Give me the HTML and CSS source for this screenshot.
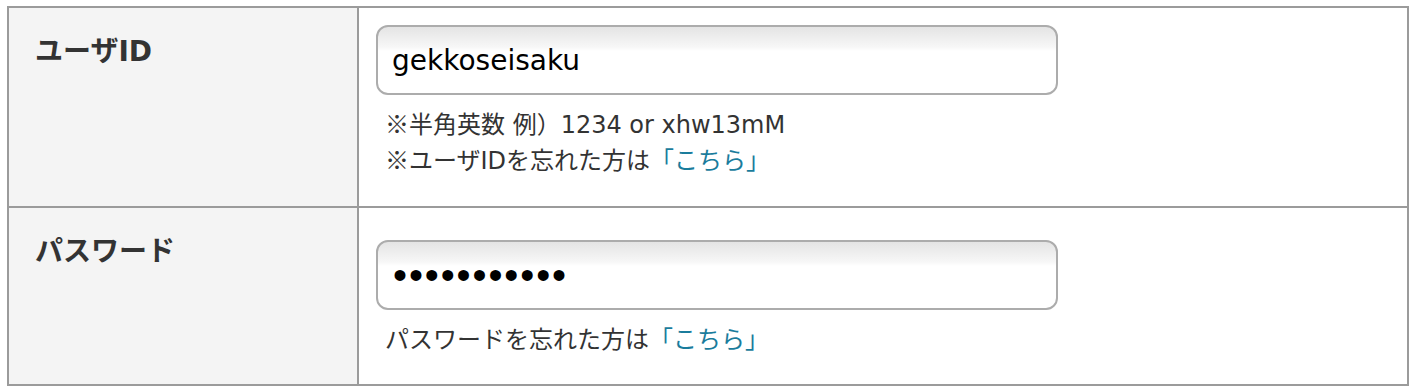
FILE: index.html
```html
<!DOCTYPE html>
<html lang="ja">
<head>
<meta charset="utf-8">
<title>ログイン</title>
<link rel="stylesheet" href="styles.css">
</head>
<body>
<div class="wrap">
  <table class="form-table">
    <tr class="row row-first">
      <th class="label">ユーザID</th>
      <td class="field">
        <input class="text-input" type="text" value="gekkoseisaku" readonly>
        <p class="note"><span class="mark">※</span>半角英数 例）1234 or xhw13mM</p>
        <p class="note"><span class="mark">※</span>ユーザIDを忘れた方は<a class="link" href="#">「こちら」</a></p>
      </td>
    </tr>
    <tr class="row row-last">
      <th class="label">パスワード</th>
      <td class="field field-pass">
        <input class="text-input pass-input" type="password" value="12345678901" readonly>
        <p class="note">パスワードを忘れた方は<a class="link" href="#">「こちら」</a></p>
      </td>
    </tr>
  </table>
</div>
</body>
</html>
```

FILE: styles.css
```css
html, body {
  margin: 0;
  padding: 0;
  background: #fff;
}

body {
  font-family: "DejaVu Sans", "Noto Sans CJK JP", sans-serif;
  color: #333;
}

.wrap {
  padding: 6px 7px;
}

.form-table {
  box-sizing: border-box;
  width: 1402px;
  border: 2px solid #9b9b9b;
  border-collapse: separate;
  border-spacing: 0;
  table-layout: fixed;
}

.label {
  box-sizing: border-box;
  width: 350px;
  background: #f4f4f4;
  border-right: 2px solid #9b9b9b;
  text-align: left;
  vertical-align: top;
  padding: 24px 0 0 26px;
  font-size: 28px;
  line-height: 40px;
  font-weight: bold;
  color: #333;
}

.row-first .label,
.row-first .field {
  border-bottom: 2px solid #9b9b9b;
}

.field {
  vertical-align: top;
  padding: 17px 0 29px 17px;
}

.field-pass {
  padding-top: 32px;
  padding-bottom: 28px;
}

.text-input {
  display: block;
  box-sizing: border-box;
  width: 682px;
  height: 70px;
  margin: 0;
  padding: 0 0 0 14px;
  border: 2px solid #acacac;
  border-radius: 12px;
  background: linear-gradient(to bottom, #e4e4e4 0px, #f7f7f7 20px, #fff 24px, #fff 100%);
  font-family: "DejaVu Sans", sans-serif;
  font-size: 28px;
  color: #000;
  outline: none;
}

.pass-input {
  font-family: "Liberation Sans", sans-serif;
  font-size: 40px;
  letter-spacing: 1.9px;
  padding-left: 15px;
}

.note {
  box-sizing: border-box;
  height: 36px;
  margin: 10px 0 0 9px;
  font-size: 24px;
  line-height: 36px;
  color: #333;
  overflow: visible;
}

.note + .note {
  margin-top: 0;
}

.mark {
  font-family: "Noto Sans CJK JP", sans-serif;
}

.link {
  color: #1a7c9c;
  text-decoration: none;
  font-family: "Noto Sans CJK JP", sans-serif;
}
```
